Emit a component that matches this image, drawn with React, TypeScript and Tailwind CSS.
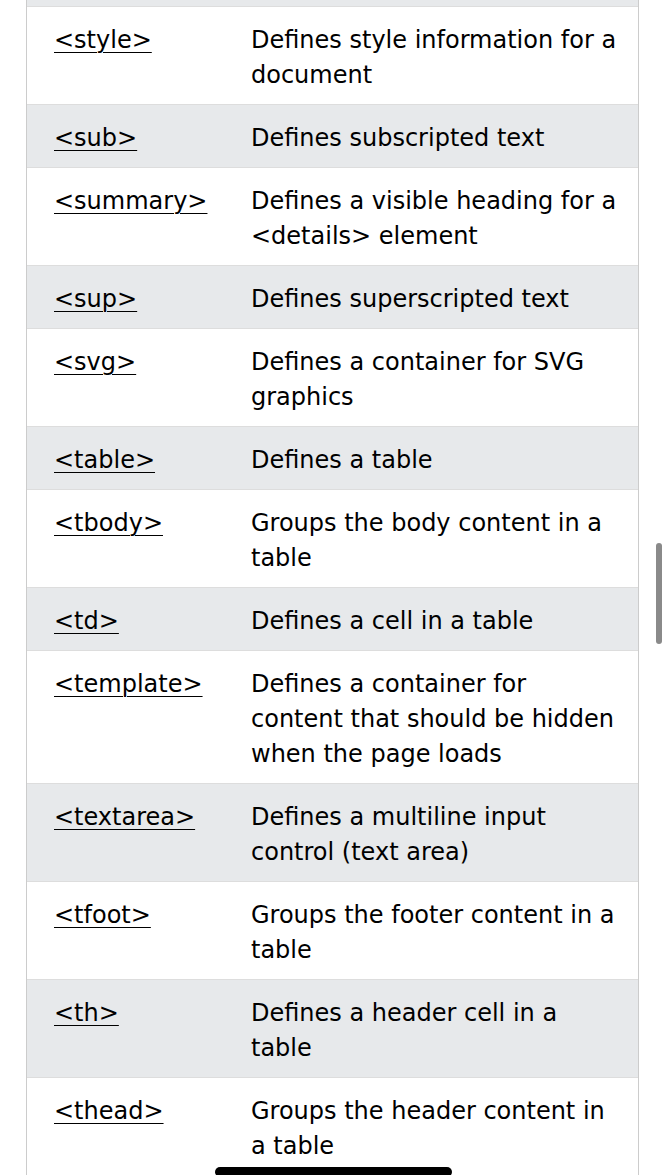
import React from 'react';

const rows: { tag: string; desc: string }[] = [
  { tag: '<style>', desc: 'Defines style information for a document' },
  { tag: '<sub>', desc: 'Defines subscripted text' },
  { tag: '<summary>', desc: 'Defines a visible heading for a <details> element' },
  { tag: '<sup>', desc: 'Defines superscripted text' },
  { tag: '<svg>', desc: 'Defines a container for SVG graphics' },
  { tag: '<table>', desc: 'Defines a table' },
  { tag: '<tbody>', desc: 'Groups the body content in a table' },
  { tag: '<td>', desc: 'Defines a cell in a table' },
  { tag: '<template>', desc: 'Defines a container for content that should be hidden when the page loads' },
  { tag: '<textarea>', desc: 'Defines a multiline input control (text area)' },
  { tag: '<tfoot>', desc: 'Groups the footer content in a table' },
  { tag: '<th>', desc: 'Defines a header cell in a table' },
  { tag: '<thead>', desc: 'Groups the header content in a table' },
];

export default function App() {
  return (
    <div
      className="relative h-[1175px] overflow-hidden bg-white text-black"
      style={{ fontFamily: '"DejaVu Sans", Verdana, sans-serif' }}
    >
      <div className="ml-[26px] w-[613px] border-x border-[#cccccc]">
        {/* tail of the previous row */}
        <div className="h-[7px] border-b border-[#dddddd] bg-[#e7e9eb]" />
        {rows.map((r, i) => (
          <div
            key={r.tag}
            className={`flex border-b border-[#dddddd] text-[24px] leading-[35px] ${
              i % 2 === 1 ? 'bg-[#e7e9eb]' : 'bg-white'
            }`}
          >
            <div className="w-[224px] shrink-0 pt-[16px] pb-[11px] pl-[27px]">
              <a href="#" className="underline decoration-1 underline-offset-[4px]">
                {r.tag}
              </a>
            </div>
            <div className="flex-1 pt-[16px] pb-[11px] pr-[16px]">{r.desc}</div>
          </div>
        ))}
      </div>

      {/* scrollbar thumb */}
      <div className="absolute left-[656px] top-[543px] h-[101px] w-[6px] rounded-full bg-[#8a8a8a]" />

      {/* home indicator */}
      <div className="absolute left-[215px] top-[1167px] h-[10px] w-[237px] rounded-full bg-black" />
    </div>
  );
}
